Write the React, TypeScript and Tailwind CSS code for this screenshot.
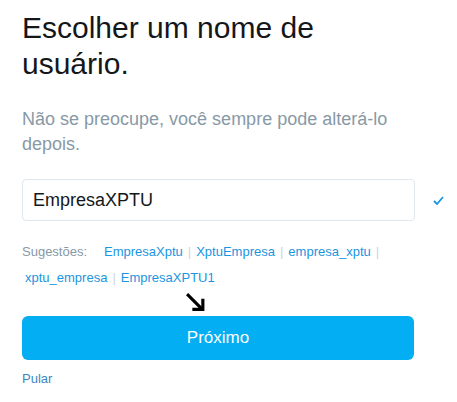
import { useState } from 'react';

const suggestions = ['EmpresaXptu', 'XptuEmpresa', 'empresa_xptu', 'xptu_empresa', 'EmpresaXPTU1'];

export default function App() {
  const [username, setUsername] = useState('EmpresaXPTU');

  return (
    <div className="w-[457px] h-[402px] bg-white px-[22px] pt-[10px] font-['Liberation_Sans',Arial,sans-serif]">
      <h1 className="text-[30px] leading-[36px] text-[#14171a] w-[340px]">Escolher um nome de usuário.</h1>
      <p className="mt-[25px] text-[18px] leading-[25px] text-[#8899a6] w-[390px]">
        Não se preocupe, você sempre pode alterá-lo depois.
      </p>

      <div className="mt-[22px] flex items-center">
        <input
          value={username}
          onChange={(e) => setUsername(e.target.value)}
          className="shrink-0 w-[393px] h-[42px] rounded-[4px] border border-[#e1e8ed] px-[10px] text-[18px] text-[#14171a] outline-none"
        />
        <svg className="shrink-0 ml-[18px]" width="11" height="9" viewBox="0 0 11 9">
          <path d="M1 5l3 3 6-7" fill="none" stroke="#1b95e0" strokeWidth="1.8" />
        </svg>
      </div>

      <div className="mt-[18px] text-[13px] leading-[26px] flex flex-wrap items-center">
        <span className="text-[#8899a6] mr-[17px]">Sugestões:</span>
        {suggestions.map((s, i) => (
          <span key={s} className={i === 3 ? 'ml-[3px]' : ''}>
            <a href="#" className="text-[#1b95e0]">{s}</a>
            {i < suggestions.length - 1 && <span className="text-[#ccd6dd] mx-[5px]">|</span>}
          </span>
        ))}
      </div>

      <div className="relative">
        <svg className="absolute left-[163px] top-[1px]" width="21" height="21" viewBox="0 0 20 20">
          <path d="M2 2l14 14" stroke="#000" strokeWidth="3" />
          <path d="M7 16.5h10v-10" fill="none" stroke="#000" strokeWidth="3" />
        </svg>
      </div>

      <button className="mt-[25px] w-[392px] h-[44px] rounded-[6px] bg-[#03aef2] text-white text-[17px]">
        Próximo
      </button>

      <a href="#" className="block mt-[9px] text-[13px] text-[#3b88c3]">Pular</a>
    </div>
  );
}
